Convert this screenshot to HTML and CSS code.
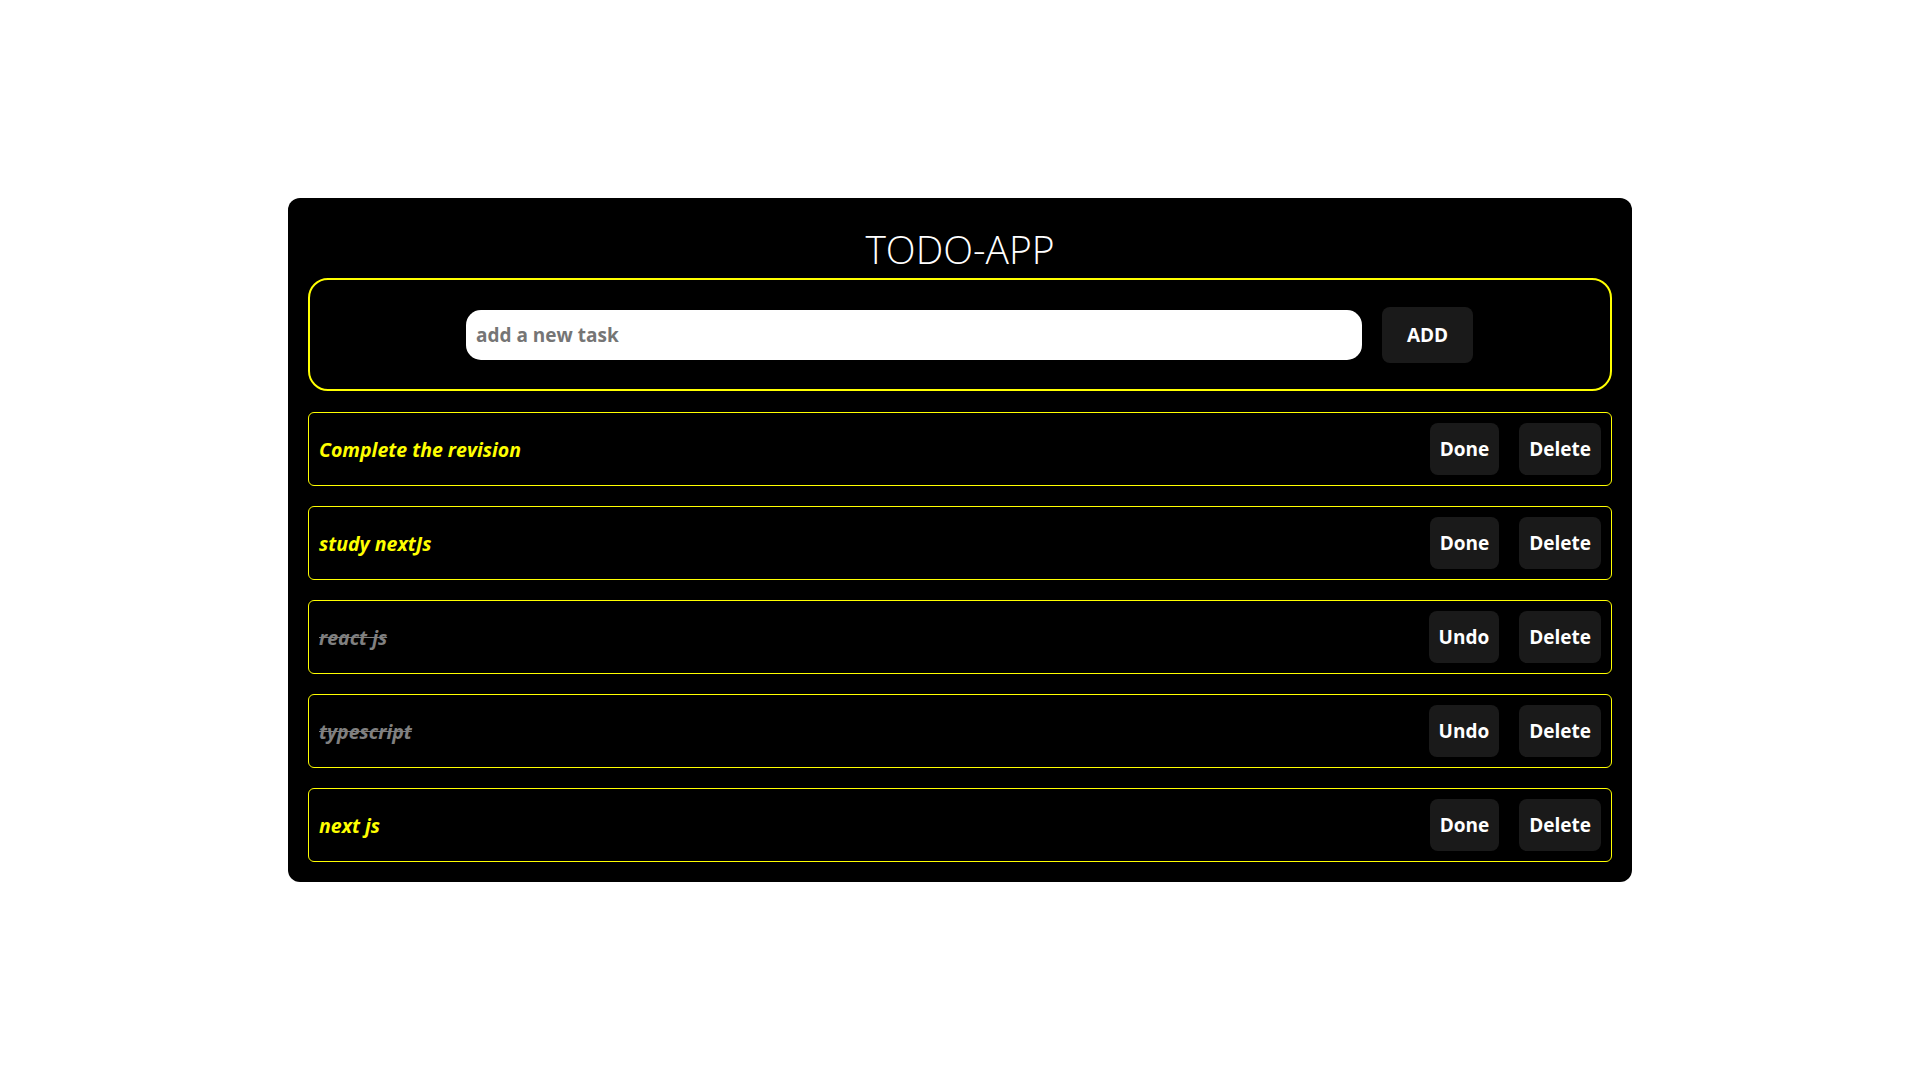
FILE: index.html
```html
<!DOCTYPE html>
<html lang="en">
<head>
<meta charset="utf-8">
<title>TODO-APP</title>
<link rel="stylesheet" href="styles.css">
</head>
<body>
<main class="app">
  <h1 class="title">TODO-APP</h1>
  <form class="add-form">
    <input class="task-input" type="text" placeholder="add a new task">
    <button class="btn btn-add" type="button">ADD</button>
  </form>
  <ul class="task-list">
    <li class="task">
      <span class="task-text">Complete the revision</span>
      <div class="actions"><button class="btn" type="button">Done</button><button class="btn" type="button">Delete</button></div>
    </li>
    <li class="task">
      <span class="task-text">study nextJs</span>
      <div class="actions"><button class="btn" type="button">Done</button><button class="btn" type="button">Delete</button></div>
    </li>
    <li class="task done">
      <span class="task-text">react js</span>
      <div class="actions"><button class="btn" type="button">Undo</button><button class="btn" type="button">Delete</button></div>
    </li>
    <li class="task done">
      <span class="task-text">typescript</span>
      <div class="actions"><button class="btn" type="button">Undo</button><button class="btn" type="button">Delete</button></div>
    </li>
    <li class="task">
      <span class="task-text">next js</span>
      <div class="actions"><button class="btn" type="button">Done</button><button class="btn" type="button">Delete</button></div>
    </li>
  </ul>
</main>
</body>
</html>
```
FILE: styles.css
```css
* { box-sizing: border-box; }

body {
  margin: 0;
  background: #ffffff;
  font-family: "Open Sans", "Noto Sans", sans-serif;
}

.app {
  width: 1344px;
  margin: 198px auto 0;
  background: #000000;
  border-radius: 12px;
  padding: 0 20px 20px;
}

.title {
  margin: 0;
  height: 80px;
  padding-top: 29px;
  text-align: center;
  color: #ffffff;
  font-size: 39px;
  font-weight: 300;
  line-height: 44px;
}

.add-form {
  height: 113px;
  border: 2px solid #ffff00;
  border-radius: 20px;
  display: flex;
  align-items: center;
  justify-content: center;
  gap: 20px;
  padding-left: 19px;
  margin: 0;
}

.task-input {
  width: 896px;
  height: 50px;
  border: none;
  outline: none;
  border-radius: 15px;
  padding: 0 10px;
  background: #ffffff;
  font-family: inherit;
  font-size: 19px;
  font-weight: 700;
  color: #333333;
}

.task-input::placeholder {
  color: #757575;
}

.btn {
  background: #1a1a1a;
  color: #ffffff;
  border: none;
  border-radius: 8px;
  height: 52px;
  padding: 0 10px;
  font-family: inherit;
  font-size: 19px;
  font-weight: 700;
  cursor: pointer;
}

.btn-add {
  width: 91px;
  height: 56px;
  padding: 0;
}

.task-list {
  list-style: none;
  margin: 21px 0 0;
  padding: 0;
  display: flex;
  flex-direction: column;
  gap: 20px;
}

.task {
  height: 74px;
  border: 1px solid #ffff00;
  border-radius: 6px;
  padding: 0 10px;
  display: flex;
  align-items: center;
  justify-content: space-between;
}

.task-text {
  color: #ffff00;
  font-size: 19.5px;
  font-weight: 700;
  font-style: italic;
}

.task.done .task-text {
  color: #808080;
  text-decoration: line-through;
}

.actions {
  display: flex;
  gap: 20px;
}
```
